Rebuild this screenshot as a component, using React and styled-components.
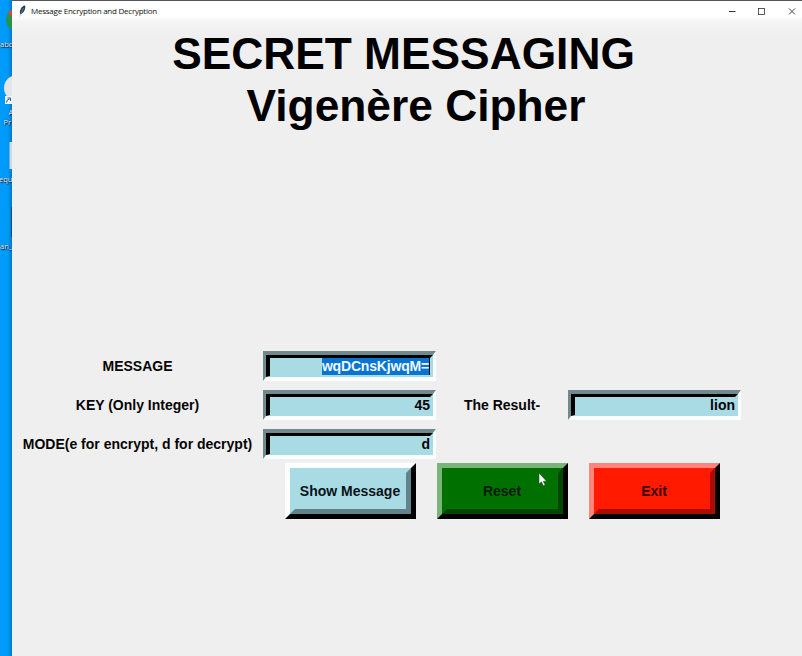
import React from "react";
import styled, { createGlobalStyle } from "styled-components";

const GlobalStyle = createGlobalStyle`
  * { box-sizing: border-box; }
  body { margin: 0; overflow: hidden; }
`;

const Screen = styled.div`
  display: flex;
  width: 802px;
  height: 656px;
  overflow: hidden;
  font-family: "Liberation Sans", Arial, sans-serif;
  color: #050505;
`;

const Desktop = styled.aside`
  position: relative;
  flex: 0 0 12px;
  overflow: hidden;
  background: linear-gradient(90deg, #009cfb 0, #0099f8 8px, #0078c8 12px);
`;

const DesktopArt = styled.svg`
  display: block;
`;

const ShortcutName = styled.span`
  position: absolute;
  left: ${(p) => p.$x}px;
  top: ${(p) => p.$y}px;
  font: 7.5px/10px "Open Sans", "Noto Sans", sans-serif;
  white-space: nowrap;
  color: #eef6ff;
  text-shadow: 0 0 1px #001a33, 1px 1px 1px #001a33;
`;

const Window = styled.main`
  flex: 1;
  display: flex;
  flex-direction: column;
  border-top: 1px solid #55555b;
  background: linear-gradient(#ffffff 0, #ffffff 15px, #f4f4f5 21px, #efeff0 34px, #efefef 100%);
`;

const TitleBar = styled.header`
  display: flex;
  align-items: center;
  height: 19px;
  padding-left: 6px;
`;

const TitleText = styled.span`
  margin-left: 4px;
  font: 8px/12px "Open Sans", "Noto Sans", sans-serif;
  letter-spacing: -0.24px;
  color: #111;
  white-space: nowrap;
`;

const WindowControls = styled.svg`
  margin-left: auto;
`;

const Heading = styled.h1`
  margin: 8px 0 0;
  font-size: 44.3px;
  line-height: 52px;
  font-weight: 700;
  text-align: center;
  white-space: pre;
  padding-right: 7px;
  color: #000;
`;

const Subheading = styled.span`
  display: block;
  padding-left: 25px;
`;

const Form = styled.section`
  display: grid;
  grid-template-columns: 251px 173px 132px 173px;
  grid-auto-rows: 30px;
  row-gap: 9px;
  margin-top: 219px;
`;

const Label = styled.label`
  grid-column: ${(p) => p.$column};
  font-size: 14px;
  line-height: 30px;
  font-weight: 700;
  text-align: center;
  white-space: nowrap;
`;

const Entry = styled.div`
  grid-column: ${(p) => p.$column};
  border: solid;
  border-width: 4px 3px 4px 3px;
  border-color: #6f898d #fbffff #fbffff #6f898d;
`;

const EntryInner = styled.div`
  display: flex;
  align-items: center;
  justify-content: flex-end;
  height: 100%;
  padding-bottom: 1px;
  border: solid;
  border-width: 3px 3px 1px 4px;
  border-color: #000 #a9dbe5 #a9dbe5 #000;
  background: #a9dbe5;
  font-size: 14px;
  line-height: 17px;
  font-weight: 700;
`;

const Selection = styled.span`
  background: #0874d2;
  color: #eef8ff;
  letter-spacing: -0.18px;
  border-right: 1px solid #000;
`;

const Actions = styled.div`
  display: flex;
  gap: 21px;
  margin: 4px 0 0 273px;
`;

const tones = {
  blue: { face: "#a9dbe5", light: "#ffffff", dark: "#63838b" },
  green: { face: "#007000", light: "#7bb47b", dark: "#004600" },
  red: { face: "#ff1a00", light: "#ff857c", dark: "#a80d00" },
};

const Button = styled.button`
  display: flex;
  width: 131px;
  height: 56px;
  padding: 0;
  background: none;
  border: 5px solid;
  border-color: ${(p) => `${tones[p.$tone].light} #000 #000 ${tones[p.$tone].light}`};
`;

const ButtonFace = styled.span`
  flex: 1;
  display: flex;
  align-items: center;
  justify-content: center;
  height: 100%;
  padding-right: 1px;
  border: 5px solid;
  border-color: ${(p) => {
    const t = tones[p.$tone];
    return `${t.face} ${t.dark} ${t.dark} ${t.face}`;
  }};
  background: ${(p) => tones[p.$tone].face};
  font: 700 14px/16px "Liberation Sans", Arial, sans-serif;
  color: ${(p) => p.$ink || "#061316"};
  white-space: nowrap;
`;

const Pointer = styled.svg`
  position: absolute;
  left: 538px;
  top: 472px;
`;

function Field({ column, children }) {
  return (
    <Entry $column={column}>
      <EntryInner>{children}</EntryInner>
    </Entry>
  );
}

function Action({ tone, ink, children }) {
  return (
    <Button $tone={tone}>
      <ButtonFace $tone={tone} $ink={ink}>{children}</ButtonFace>
    </Button>
  );
}

export default function App() {
  return (
    <Screen>
      <GlobalStyle />
      <Desktop>
        <DesktopArt width="12" height="260">
          <circle cx="17" cy="20" r="11" fill="#27934d" />
          <path d="M8 13a11 11 0 0 1 9-4v9h-4z" fill="#d94a3c" />
          <circle cx="17" cy="88" r="13" fill="#e3e5e7" />
          <path d="M5 96h7v8H5z" fill="#f1f5f8" />
          <path d="M6.5 102.5q0-3 3-3.5M7.5 98h3v3" stroke="#285b9b" fill="none" />
          <path d="M9.5 142h2.5v27H9.5z" fill="#d7d9da" />
          <path d="M11 207h1v30h-1z" fill="#174f78" />
        </DesktopArt>
        <ShortcutName $x={0} $y={39}>abc</ShortcutName>
        <ShortcutName $x={8.5} $y={107}>A</ShortcutName>
        <ShortcutName $x={3.5} $y={117}>Pr</ShortcutName>
        <ShortcutName $x={-1} $y={174}>equ</ShortcutName>
        <ShortcutName $x={0} $y={241}>an_</ShortcutName>
      </Desktop>
      <Window>
        <TitleBar>
          <svg width="9" height="12" viewBox="0 0 9 12">
            <path d="M2 9C1 5 4 1 7 .5 8 3 6 8 3 9z" fill="#25394b" />
            <path d="M1.5 11.5 5.5 3" stroke="#86a8c4" strokeWidth=".7" />
          </svg>
          <TitleText>Message Encryption and Decryption</TitleText>
          <WindowControls width="80" height="16" fill="none" stroke="#333">
            <path d="M7 8.5h6.5" />
            <rect x="36.5" y="5.5" width="6" height="6" strokeWidth=".8" />
            <path d="m67 5.5 6 6m0-6-6 6" strokeWidth=".9" />
          </WindowControls>
        </TitleBar>
        <Heading>
          SECRET MESSAGING
          <Subheading>Vigenère Cipher</Subheading>
        </Heading>
        <Form>
          <Label $column={1}>MESSAGE</Label>
          <Field column={2}><Selection>wqDCnsKjwqM=</Selection></Field>
          <Label $column={1}>KEY (Only Integer)</Label>
          <Field column={2}>45</Field>
          <Label $column={3}>The Result-</Label>
          <Field column={4}>lion</Field>
          <Label $column={1}>MODE(e for encrypt, d for decrypt)</Label>
          <Field column={2}>d</Field>
        </Form>
        <Actions>
          <Action tone="blue">Show Message</Action>
          <Action tone="green" ink="#001c00">Reset</Action>
          <Action tone="red" ink="#3a0500">Exit</Action>
        </Actions>
      </Window>
      <Pointer width="10" height="16" viewBox="0 0 10 16">
        <path d="M1 1v11l2.5-2.2 1.8 4 1.8-.9-1.8-3.7H8.5z" fill="#fff" stroke="#24402a" strokeWidth=".5" />
      </Pointer>
    </Screen>
  );
}
